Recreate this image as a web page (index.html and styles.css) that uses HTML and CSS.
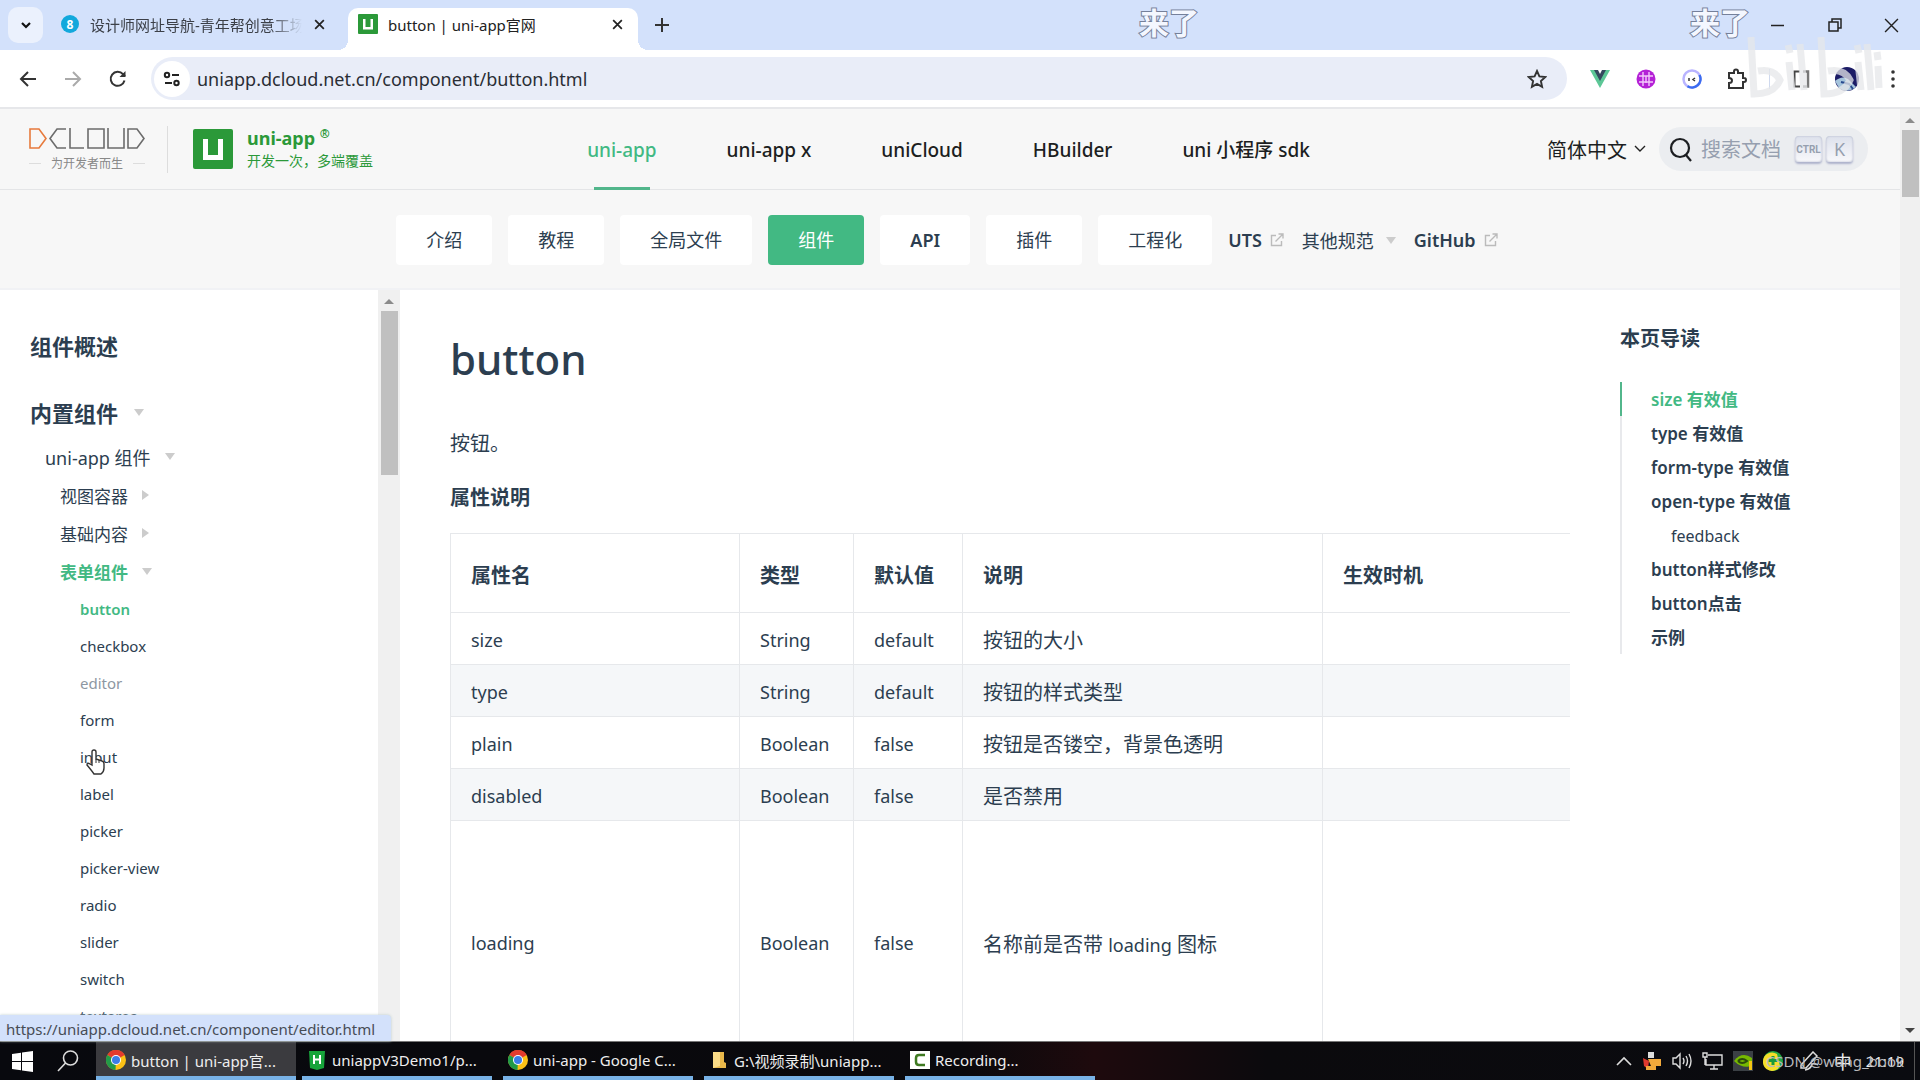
FILE: index.html
```html
<!DOCTYPE html>
<html lang="zh-CN">
<head>
<meta charset="utf-8">
<title>button | uni-app官网</title>
<link rel="stylesheet" href="styles.css">
</head>
<body>
<svg class="defs" aria-hidden="true">
  <symbol id="chrome" viewBox="0 0 20 20">
    <circle cx="10" cy="10" r="10" fill="#fbc116"/>
    <path d="M10 10 1.300 5A10 10 0 0 1 18.700 5z" fill="#e33b2e"/>
    <path d="M10 10 1.300 5A10 10 0 0 0 9.500 20z" fill="#229a48"/>
    <circle cx="10" cy="10" r="5" fill="#fff"/><circle cx="10" cy="10" r="4" fill="#3b7de8"/>
  </symbol>
  <symbol id="close" viewBox="0 0 12 12"><path d="M2 2l8 8M10 2l-8 8" stroke="currentColor" stroke-width="1.600"/></symbol>
  <symbol id="unilogo" viewBox="0 0 40 40">
    <rect width="40" height="40" rx="2" fill="#2b9939"/>
    <path d="M10 10h5v16h10V10h5v21H10z" fill="#fff"/>
  </symbol>
  <symbol id="ext" viewBox="0 0 14 14"><path d="M6 2.500H1.500v10h10V8M8.500 1h4.500v4.500M13 1 5.500 8.500" fill="none" stroke="#bbb" stroke-width="1.400"/></symbol>
</svg>

<header class="tabstrip">
  <button class="tab-search" aria-label="搜索标签页"><svg width="12" height="12" viewBox="0 0 12 12"><path d="M2 4l4 4 4-4" fill="none" stroke="#111" stroke-width="2.200"/></svg></button>
  <div class="tab">
    <span class="favicon-8">8</span>
    <span class="tab-title fade">设计师网址导航-青年帮创意工场</span>
    <button class="tab-close" aria-label="关闭"><svg width="13" height="13"><use href="#close"/></svg></button>
  </div>
  <div class="tab active">
    <svg width="20" height="20"><use href="#unilogo"/></svg>
    <span class="tab-title">button | uni-app官网</span>
    <button class="tab-close" aria-label="关闭"><svg width="13" height="13"><use href="#close"/></svg></button>
  </div>
  <button class="tab-new" aria-label="新标签页"><svg width="14" height="14" viewBox="0 0 14 14"><path d="M7 0v14M0 7h14" stroke="#333" stroke-width="2"/></svg></button>
  <div class="window-controls">
    <button aria-label="最小化"><svg width="13" height="13" viewBox="0 0 13 13"><path d="M0 6.500h13" stroke="#222" stroke-width="1.500"/></svg></button>
    <button aria-label="还原"><svg width="14" height="14" viewBox="0 0 14 14"><path d="M1 4h9v9H1zM4 4V1h9v9h-3" fill="none" stroke="#222" stroke-width="1.500"/></svg></button>
    <button aria-label="关闭窗口"><svg width="15" height="15" viewBox="0 0 14 14"><path d="M1 1l12 12M13 1 1 13" stroke="#222" stroke-width="1.300"/></svg></button>
  </div>
  <span class="danmaku first">来了</span>
  <span class="danmaku second">来了</span>
</header>

<div class="toolbar">
  <button class="nav-btn" aria-label="后退"><svg width="18" height="18" viewBox="0 0 18 18"><path d="M17 9H2M9 2 2 9l7 7" fill="none" stroke="#333" stroke-width="2"/></svg></button>
  <button class="nav-btn" aria-label="前进"><svg width="18" height="18" viewBox="0 0 18 18"><path d="M1 9h15M9 2l7 7-7 7" fill="none" stroke="#aaa" stroke-width="2"/></svg></button>
  <button class="nav-btn" aria-label="刷新"><svg width="18" height="18" viewBox="0 0 18 18"><path d="M15.500 10.500A7 7 0 1 1 14 4.200l2 2" fill="none" stroke="#333" stroke-width="2"/><path d="M16.500 1v6h-6z" fill="#333"/></svg></button>
  <div class="omnibox">
    <button class="site-info" aria-label="查看网站信息"><svg width="18" height="18" viewBox="0 0 18 18"><g fill="none" stroke="#222" stroke-width="2"><circle cx="4" cy="5" r="2.200"/><path d="M9 5h7"/><circle cx="13.500" cy="13" r="2.200"/><path d="M2 13h7"/></g></svg></button>
    <input class="url" aria-label="地址" value="uniapp.dcloud.net.cn/component/button.html">
    <button class="star" aria-label="收藏"><svg width="20" height="20" viewBox="0 0 20 20"><path d="M10 2l2.400 5.400 5.900.6-4.400 4 1.200 5.800L10 14.900l-5.100 2.900 1.200-5.800-4.400-4 5.900-.6z" fill="none" stroke="#333" stroke-width="1.900"/></svg></button>
  </div>
  <div class="extensions">
    <button aria-label="Vue"><svg width="20" height="18" viewBox="0 0 20 18"><path d="M0 0h5l5 9 5-9h5L10 18z" fill="#5cc796"/><path d="M4 0h4l2 4 2-4h4l-6 11z" fill="#35495e"/></svg></button>
    <button aria-label="翻译"><svg width="20" height="20" viewBox="0 0 20 20"><circle cx="10" cy="10" r="9.500" fill="#b421d6"/><path d="M3 7h14M3 13h14M7 3v14M13 3v14M10 7v7" stroke="#f3c8fb" stroke-width="1.400"/></svg></button>
    <button aria-label="助手"><svg width="20" height="20" viewBox="0 0 20 20"><circle cx="10" cy="10" r="8.500" fill="#fff" stroke="#b9b4ff" stroke-width="2.500"/><path d="M17.500 6a8.500 8.500 0 0 1-12 11.200" fill="none" stroke="#3a6cf0" stroke-width="2.500"/><path d="M7 9v3M13 9l-2 1.500 2 1.500" fill="none" stroke="#333" stroke-width="1.500"/></svg></button>
    <button aria-label="扩展程序"><svg width="22" height="22" viewBox="0 0 22 22"><path d="M2 5h5V3.500a2 2 0 0 1 4 0V5h5v5h1a2 2 0 0 1 0 4h-1v6H2v-5c4 0 4-5 0-5z" fill="none" stroke="#333" stroke-width="2"/></svg></button>
    <span class="sep"></span>
    <button aria-label="侧边栏"><svg width="18" height="18" viewBox="0 0 18 18"><path d="M8 1.500H2.500v15H8" fill="none" stroke="#444" stroke-width="2"/><path d="M11 1.500h5v15h-5" fill="none" stroke="#777" stroke-width="2.500"/></svg></button>
    <button aria-label="个人资料"><svg width="24" height="24" viewBox="0 0 24 24"><circle cx="12" cy="12" r="12" fill="#1c1c66"/><path d="M0 14q7-6 13-2l8 8Q12 27 4 21z" fill="#a5c4dc"/><path d="M6 15l8 2 4 5" fill="none" stroke="#26498e" stroke-width="2"/></svg></button>
    <button aria-label="菜单"><svg width="4" height="18" viewBox="0 0 4 18" fill="#333"><circle cx="2" cy="2" r="1.800"/><circle cx="2" cy="9" r="1.800"/><circle cx="2" cy="16" r="1.800"/></svg></button>
  </div>
  <svg class="bili-mark" width="140" height="64" viewBox="0 0 140 64" aria-hidden="true"><g fill="none" stroke="#e6e7ea" stroke-opacity=".75" stroke-width="7"><path d="M5 1l3 57q20 0 26-14-6-12-22-9M42 9l2 8M43 26l3 28M54 8l4 46M75 1l3 57q20 0 26-14-6-12-22-9M111 9l2 8M112 26l3 28M121 8l4 46M131 16l1 8M132 30l1 22"/></g></svg>
</div>

<div class="viewport">
  <div class="page">
    <nav class="topnav" aria-label="产品">
      <div class="brand">
        <a class="dcloud" href="#">
          <svg width="116" height="22" viewBox="0 0 116 22" fill="none" stroke="#6c6c6c" stroke-width="1.600"><path d="M1 1h9l7 9.500L10 20H1z" stroke="#e77a3c"/><path d="M37 1h-9l-7 9.500L28 20h9M41 0v20h14M59 1h16v19H59zM79 0v20h16V0M99 1h9l7 9.500-7 9.500h-9z"/></svg>
          <span class="slogan">为开发者而生</span>
        </a>
        <a class="uniapp" href="#">
          <svg width="40" height="40"><use href="#unilogo"/></svg>
          <span class="uniapp-text"><b>uni-app <sup>®</sup></b><span>开发一次，多端覆盖</span></span>
        </a>
      </div>
      <div class="products">
        <a class="current" href="#">uni-app</a><a href="#">uni-app x</a><a href="#">uniCloud</a><a href="#">HBuilder</a><a href="#">uni 小程序 sdk</a>
      </div>
      <div class="tools">
        <button class="lang">简体中文<svg width="12" height="8" viewBox="0 0 12 8"><path d="M1 1l5 5 5-5" fill="none" stroke="#222" stroke-width="1.400"/></svg></button>
        <label class="search">
          <svg width="24" height="26" viewBox="0 0 24 26"><circle cx="11" cy="12" r="9" fill="none" stroke="#1c1e21" stroke-width="2.200"/><path d="M17 19l5 6" stroke="#1c1e21" stroke-width="2.200"/></svg>
          <input aria-label="搜索文档" placeholder="搜索文档">
          <kbd class="ctrl">CTRL</kbd><kbd>K</kbd>
        </label>
      </div>
    </nav>
    <nav class="subnav" aria-label="文档">
      <a class="pill" href="#">介绍</a><a class="pill" href="#">教程</a><a class="pill" href="#">全局文件</a><a class="pill current" href="#">组件</a><a class="pill latin" href="#">API</a><a class="pill" href="#">插件</a><a class="pill" href="#">工程化</a>
      <a class="plain latin" href="#">UTS<svg width="14" height="14"><use href="#ext"/></svg></a>
      <button class="plain">其他规范<i class="caret down"></i></button>
      <a class="plain latin" href="#">GitHub<svg width="14" height="14"><use href="#ext"/></svg></a>
    </nav>
    <div class="columns">
      <aside class="sidebar">
        <ul class="tree">
          <li class="l0"><a href="#">组件概述</a></li>
          <li class="l0"><a href="#">内置组件</a><i class="caret down"></i></li>
          <li class="l1"><a href="#">uni-app 组件</a><i class="caret down"></i></li>
          <li class="l2"><a href="#">视图容器</a><i class="caret right"></i></li>
          <li class="l2"><a href="#">基础内容</a><i class="caret right"></i></li>
          <li class="l2 current"><a href="#">表单组件</a><i class="caret down"></i></li>
          <li class="l3 current"><a href="#">button</a></li>
          <li class="l3"><a href="#">checkbox</a></li>
          <li class="l3 hover"><a href="#">editor</a></li>
          <li class="l3"><a href="#">form</a></li>
          <li class="l3"><a href="#">input</a>
            <svg class="cursor" width="19" height="26" viewBox="0 0 19 26" aria-hidden="true"><path d="M6 16V3q0-2 2-2t2 2v7l6 2q2 .6 2 3v4q0 4-3 6H8q-2-3-7-9 0-3 3-1z" fill="#fff" stroke="#333" stroke-width="1.400"/><path d="M10 10v4M13 11v3" stroke="#333"/></svg></li>
          <li class="l3"><a href="#">label</a></li>
          <li class="l3"><a href="#">picker</a></li>
          <li class="l3"><a href="#">picker-view</a></li>
          <li class="l3"><a href="#">radio</a></li>
          <li class="l3"><a href="#">slider</a></li>
          <li class="l3"><a href="#">switch</a></li>
          <li class="l3"><a href="#">textarea</a></li>
        </ul>
        <div class="scrollbar inner"><i class="arrow up"></i><span class="thumb"></span></div>
      </aside>
      <main class="content">
        <h1>button</h1>
        <p>按钮。</p>
        <h3>属性说明</h3>
        <div class="table-wrap">
          <table>
            <colgroup><col class="c-name"><col class="c-type"><col class="c-default"><col class="c-desc"><col class="c-when"></colgroup>
            <thead><tr><th>属性名</th><th>类型</th><th>默认值</th><th>说明</th><th>生效时机</th></tr></thead>
            <tbody>
              <tr><td class="latin">size</td><td class="latin">String</td><td class="latin">default</td><td>按钮的大小</td><td></td></tr>
              <tr><td class="latin">type</td><td class="latin">String</td><td class="latin">default</td><td>按钮的样式类型</td><td></td></tr>
              <tr><td class="latin">plain</td><td class="latin">Boolean</td><td class="latin">false</td><td>按钮是否镂空，背景色透明</td><td></td></tr>
              <tr><td class="latin">disabled</td><td class="latin">Boolean</td><td class="latin">false</td><td>是否禁用</td><td></td></tr>
              <tr class="tall"><td class="latin">loading</td><td class="latin">Boolean</td><td class="latin">false</td><td>名称前是否带 <span class="latin">loading</span> 图标</td><td></td></tr>
            </tbody>
          </table>
        </div>
      </main>
      <aside class="toc">
        <h2>本页导读</h2>
        <ul>
          <li class="current"><a href="#">size 有效值</a></li>
          <li><a href="#">type 有效值</a></li>
          <li><a href="#">form-type 有效值</a></li>
          <li><a href="#">open-type 有效值</a></li>
          <li class="sub"><a href="#">feedback</a></li>
          <li><a href="#">button样式修改</a></li>
          <li><a href="#">button点击</a></li>
          <li><a href="#">示例</a></li>
        </ul>
      </aside>
    </div>
  </div>
  <div class="scrollbar outer"><i class="arrow up"></i><span class="thumb"></span><i class="arrow down"></i></div>
  <div class="status">https://uniapp.dcloud.net.cn/component/editor.html</div>
</div>

<footer class="taskbar">
  <button class="sys" aria-label="开始"><svg width="21" height="21" viewBox="0 0 21 21" fill="#fff"><path d="M0 3l9-1.300V10H0zM10 1.500 21 0v10H10zM0 11h9v8.300L0 18zM10 11h11v10l-11-1.500z"/></svg></button>
  <button class="sys" aria-label="搜索"><svg width="22" height="22" viewBox="0 0 22 22"><circle cx="13.500" cy="8" r="7" fill="none" stroke="#ddd" stroke-width="1.600"/><path d="M8.500 13 1 21" stroke="#ddd" stroke-width="1.600"/></svg></button>
  <div class="tasks">
    <button class="task active"><svg width="20" height="20"><use href="#chrome"/></svg>button | uni-app官...</button>
    <button class="task"><svg width="20" height="20" viewBox="0 0 20 20"><path d="M2 1h16l-1 17-7 2-7-2z" fill="#17a43a"/><path d="M7 5v9M13 5v9M7 9.500h6" stroke="#fff" stroke-width="2"/></svg>uniappV3Demo1/p...</button>
    <button class="task"><svg width="20" height="20"><use href="#chrome"/></svg>uni-app - Google C...</button>
    <button class="task"><svg width="20" height="20" viewBox="0 0 20 20"><path d="M4 2h11v10l2 1v5H4z" fill="#e9b84a"/><path d="M4 2h7v14l-7 2z" fill="#fbdc87"/></svg>G:\视频录制\uniapp...</button>
    <button class="task"><svg width="20" height="20" viewBox="0 0 20 20"><path d="M0 1h20v18H0z" fill="#fff"/><path d="M15 5H9Q6 5 6 8v4q0 3 3 3h6" fill="none" stroke="#3f7a22" stroke-width="2.500"/></svg>Recording...</button>
  </div>
  <div class="tray">
    <svg width="16" height="10" viewBox="0 0 16 10"><path d="M1 9l7-7 7 7" fill="none" stroke="#ddd" stroke-width="1.600"/></svg>
    <svg width="20" height="20" viewBox="0 0 20 20"><path d="M6 1h6v6H6z" fill="#ddd"/><path d="M1 7l6 3-1 8-4-3z" fill="#e0392e"/><path d="M6 8h13v7H9z" fill="#f2a93b"/><path d="M4 15h10v4H4z" fill="#f2a93b"/></svg>
    <svg width="20" height="18" viewBox="0 0 20 18" fill="none" stroke="#ddd" stroke-width="1.400"><path d="M1 6h3l4-4v14l-4-4H1zM11 6q2 3 0 6M14 4q3 5 0 10M17 2q4 7 0 14"/></svg>
    <svg width="21" height="18" viewBox="0 0 21 18" fill="none" stroke="#ddd" stroke-width="1.400"><path d="M6 3h14v10H4V7M8 17h8M12 13v4M1 1h4v4H1zM3 5v8"/></svg>
    <svg width="20" height="20" viewBox="0 0 20 20"><path d="M0 0h20v20H0z" fill="#3b4045"/><path d="M1 10q8-10 18-3v8q-10 3-18-5z" fill="#76b900"/><path d="M5 10q4-4 9 0-5 4-9 0" fill="none" stroke="#2c4a0a" stroke-width="2"/><path d="M16 10h3v9h-3z" fill="#f3c513"/></svg>
    <svg width="20" height="20" viewBox="0 0 20 20"><circle cx="10" cy="10" r="10" fill="#22a845"/><path d="M0 10a9 9 0 0 1 14-7l3 12a9 9 0 0 1-17-5" fill="#f5dd2a"/><path d="M10 5v9M5.500 9.500h9" stroke="#189a3c" stroke-width="3"/></svg>
    <svg class="pen" width="20" height="20" viewBox="0 0 20 20" fill="none" stroke="#ddd" stroke-width="1.500"><path d="M2 14 14 1l4 4L7 17H2zM6 19q6-1 7-6 3-1 6 1"/></svg>
    <span class="ime">中</span>
    <time>21:19</time>
    <span class="csdn">CSDN @wang_book</span>
  </div>
</footer>
</body>
</html>
```

FILE: styles.css
```css
* { box-sizing: border-box; }
body {
  margin: 0;
  height: 100vh;
  display: flex;
  flex-direction: column;
  overflow: hidden;
  background: #fff;
  color: #2c3e50;
  font-family: "Noto Sans", "Noto Sans CJK SC", sans-serif;
  font-size: 18px;
}
button, input { font: inherit; color: inherit; border: 0; background: none; padding: 0; margin: 0; }
a { color: inherit; text-decoration: none; }
ul { list-style: none; margin: 0; padding: 0; }
svg { display: block; flex: none; }
.defs { position: absolute; width: 0; height: 0; }

/* Browser tabs */
.tabstrip { position: relative; flex: none; display: flex; align-items: center; height: 50px; padding-left: 8px; background: #d3e1fb; color: #3c4048; font-size: 15px; }
.tab-search { display: grid; place-items: center; width: 35px; height: 36px; border-radius: 10px; background: #ebf1fd; }
.tab { display: flex; align-items: center; width: 290px; height: 42px; margin-top: 8px; padding: 0 7px 10px 18px; gap: 11px; }
.tab.active { position: relative; margin-left: 15px; padding: 0 14px 10px 10px; gap: 10px; background: #fff; border-radius: 10px 10px 0 0; color: #222; }
.tab.active::before, .tab.active::after { content: ""; position: absolute; bottom: 0; width: 10px; height: 10px; }
.tab.active::before { left: -10px; background: radial-gradient(circle at 0 0, #d3e1fb 10px, #fff 10px); }
.tab.active::after { right: -10px; background: radial-gradient(circle at 100% 0, #d3e1fb 10px, #fff 10px); }
.favicon-8 { display: grid; place-items: center; flex: none; width: 18px; height: 18px; border-radius: 9px; background: #12a8dc; color: #fff; font-size: 12px; font-weight: 700; }
.tab-title { flex: 1; overflow: hidden; white-space: nowrap; }
.fade { -webkit-mask-image: linear-gradient(90deg, #000 85%, transparent); mask-image: linear-gradient(90deg, #000 85%, transparent); }
.tab-close { color: #222; }
.tab-new { margin-left: 17px; }
.window-controls { display: flex; margin-left: auto; }
.window-controls button { display: grid; place-items: center; width: 57px; height: 50px; }
.danmaku { position: absolute; top: 1px; color: #f4f7ff; font-size: 30px; line-height: 44px; font-weight: 700; -webkit-text-stroke: 2px #75809a; paint-order: stroke fill; }
.danmaku.first { left: 1139px; }
.danmaku.second { right: 170px; }

/* Browser toolbar */
.toolbar { position: relative; flex: none; display: flex; align-items: center; height: 59px; padding: 0 4px 0 5px; border-bottom: 2px solid #e6e7ea; background: #fff; }
.nav-btn { display: grid; place-items: center; width: 45px; height: 44px; }
.omnibox { flex: 1; display: flex; align-items: center; height: 43px; margin: 0 10px 0 11px; padding: 0 20px 0 3px; border-radius: 22px; background: #e9edf8; }
.site-info { display: grid; place-items: center; width: 36px; height: 36px; border-radius: 18px; background: #fff; }
.url { flex: 1; margin-left: 7px; color: #2a2e35; outline: 0; }
.extensions { display: flex; align-items: center; }
.extensions button { display: grid; place-items: center; width: 46px; height: 44px; }
.sep { width: 1px; height: 20px; margin: 0 8px; background: #cfd9ee; }
.bili-mark { position: absolute; right: 34px; top: -14px; pointer-events: none; }

/* Page frame */
.viewport { position: relative; flex: 1; min-height: 0; display: flex; }
.page { flex: 1; min-width: 0; display: flex; flex-direction: column; }
.scrollbar { flex: none; display: flex; flex-direction: column; align-items: center; background: #f0f0f0; }
.scrollbar .thumb { width: 17px; background: #c0c0c0; }
.outer { width: 20px; }
.outer .thumb { height: 67px; margin-bottom: auto; }
.inner { width: 22px; }
.inner .thumb { height: 164px; }
.arrow { width: 0; height: 0; border: 5px solid transparent; }
.arrow.up { border-top-width: 0; border-bottom-color: #8b8b8b; margin: 9px 0 7px; }
.arrow.down { border-bottom-width: 0; border-top-color: #444; margin-bottom: 8px; }

/* Site navigation */
.topnav { flex: none; display: grid; grid-template-columns: 1fr auto 1fr; align-items: center; height: 81px; padding: 0 32px 0 29px; border-bottom: 1px solid #e4e5e7; background: #f7f7f7; color: #1c1e21; }
.brand { display: flex; align-items: center; }
.dcloud { display: flex; flex-direction: column; gap: 5px; width: 139px; padding-top: 2px; border-right: 1px solid #ddd; }
.slogan { display: flex; align-items: center; gap: 10px; width: 116px; color: #888; font-size: 12px; line-height: 18px; white-space: nowrap; }
.slogan::before, .slogan::after { content: ""; flex: 1; height: 1px; background: #ddd; }
.uniapp { display: flex; align-items: center; gap: 14px; margin-left: 25px; color: #2b9939; }
.uniapp-text { display: flex; flex-direction: column; font-size: 14px; line-height: 22px; white-space: nowrap; }
.uniapp-text b { font-size: 18px; line-height: 24px; font-weight: 700; }
.uniapp-text sup { font-size: 12px; line-height: 12px; }
.products { display: flex; gap: 70px; font-size: 19px; font-weight: 500; }
.products a { position: relative; height: 80px; line-height: 82px; white-space: nowrap; }
.products .current { color: #42b983; }
.products .current::after { content: ""; position: absolute; left: 7px; right: 7px; bottom: -1px; height: 3px; background: #52b68b; }
.tools { display: flex; align-items: center; justify-content: flex-end; gap: 13px; }
.lang { display: flex; align-items: center; gap: 7px; font-size: 20px; }
.search { display: flex; align-items: center; width: 209px; height: 44px; padding: 0 14px 0 10px; border-radius: 22px; background: #ebedf0; }
.search input { width: 84px; margin: 0 10px 0 8px; font-size: 20px; outline: 0; }
.search input::placeholder { color: #969faf; opacity: 1; }
kbd { flex: none; display: grid; place-items: center; width: 27px; height: 26px; margin-right: 4px; border-radius: 4px; background: linear-gradient(#dde1ec, #f8f8fb); box-shadow: 0 2px 2px #aeb3cc, inset 0 0 2px #aab0c4; color: #969faf; font: 18px "Noto Sans", sans-serif; }
.ctrl { font: 700 10px "Roboto", sans-serif; }
.subnav { flex: none; display: flex; align-items: center; justify-content: center; gap: 16px; height: 100px; padding: 2px 4px 0 0; border-bottom: 2px solid #f1f2f5; background: #f7f7f7; }
.pill { height: 50px; padding: 0 30px; border-radius: 4px; background: #fff; line-height: 50px; }
.pill.current { background: #42b983; color: #fff; }
.subnav .latin { font-weight: 600; }
.plain { display: flex; align-items: center; gap: 8px; margin-right: 2px; }
.plain .caret { margin-left: 4px; }
.caret { width: 0; height: 0; border: 5px solid transparent; }
.caret.down { border-top: 7px solid #ccc; border-bottom: 0; }
.caret.right { border-left: 7px solid #ccc; border-right: 0; }

/* Document columns */
.columns { flex: 1; min-height: 0; display: grid; grid-template-columns: 400px 1fr 280px; }
.sidebar { display: flex; min-height: 0; overflow: hidden; }
.tree { flex: 1; padding-top: 35px; }
.tree li { position: relative; display: flex; align-items: center; gap: 14px; }
.tree .l0 { height: 40px; gap: 16px; padding-left: 30px; margin-bottom: 27px; font-size: 22px; font-weight: 700; }
.tree .l0 + .l0 { margin-bottom: 5px; }
.l1 { height: 39px; padding-left: 45px; }
.l2 { height: 38px; padding-left: 60px; font-size: 17px; }
.l3 { height: 37px; padding-left: 80px; font-size: 15px; }
.tree .current { color: #42b983; font-weight: 600; }
.hover { color: #8d97a2; }
.cursor { position: absolute; left: 86px; top: 11px; }
.content { min-width: 0; overflow: hidden; padding: 41px 50px 0; font-size: 20px; }
h1, h2, h3, p { margin: 0; }
h1 { font-size: 42px; line-height: 56px; font-weight: 500; }
.content p { margin-top: 40px; line-height: 34px; }
h3 { margin: 20px 0 18px; font-size: 20px; line-height: 34px; }
.table-wrap { overflow: hidden; }
table { table-layout: fixed; width: 1300px; border-collapse: collapse; }
.c-name { width: 289px; }
.c-type { width: 114px; }
.c-default { width: 109px; }
.c-desc { width: 360px; }
th, td { height: 52px; padding: 2px 20px 0; border: 1px solid #e6e8eb; text-align: left; white-space: nowrap; }
th { height: 79px; }
td.latin, td .latin { font-size: 18px; }
tbody tr:nth-child(even) { background: #f5f7f9; }
.tall td { height: 243px; }
.toc h2 { padding-top: 33px; font-size: 20px; line-height: 32px; }
.toc ul { margin-top: 27px; border-left: 2px solid #e8e9ec; font-size: 17px; font-weight: 600; }
.toc li { height: 34px; margin-left: -2px; padding-left: 29px; border-left: 2px solid transparent; line-height: 36px; }
.toc .current { border-color: #52b68b; color: #42b983; }
.toc .sub { padding-left: 49px; font-weight: 400; font-size: 16px; }
.status { position: absolute; left: 0; bottom: 0; height: 26px; padding: 0 16px 0 6px; border-radius: 0 4px 0 0; background: #d3e1fb; box-shadow: 0 0 3px #bcc; color: #474c55; font-size: 15px; line-height: 28px; }

/* Windows taskbar */
.taskbar { flex: none; display: flex; height: 39px; border-top: 1px solid #777; background: linear-gradient(90deg, #08090e, #0a090c 50%, #1e0a0d 57%, #0b0a0d 66%, #0a0b10); color: #eee; font-size: 15px; }
.sys { display: grid; place-items: center; width: 45px; }
.tasks { display: flex; gap: 11px; margin-left: 6px; }
.task { display: flex; align-items: center; gap: 5px; width: 190px; padding: 2px 0 0 5px; border-bottom: 4px solid #78b2e6; white-space: nowrap; overflow: hidden; }
.task.active { width: 200px; padding-left: 10px; margin-right: -5px; background: #3b3b3f; }
.tray { position: relative; display: flex; align-items: center; gap: 10px; margin-left: auto; padding-right: 10px; margin-right: 5px; border-right: 1px solid #555; }
.pen { margin-left: 6px; }
.ime { margin-left: 5px; font-size: 18px; }
.tray time { margin-left: 4px; }
.csdn { position: absolute; right: 10px; top: 8px; color: #b9b9bd; font-size: 15px; line-height: 22px; white-space: nowrap; }
```
